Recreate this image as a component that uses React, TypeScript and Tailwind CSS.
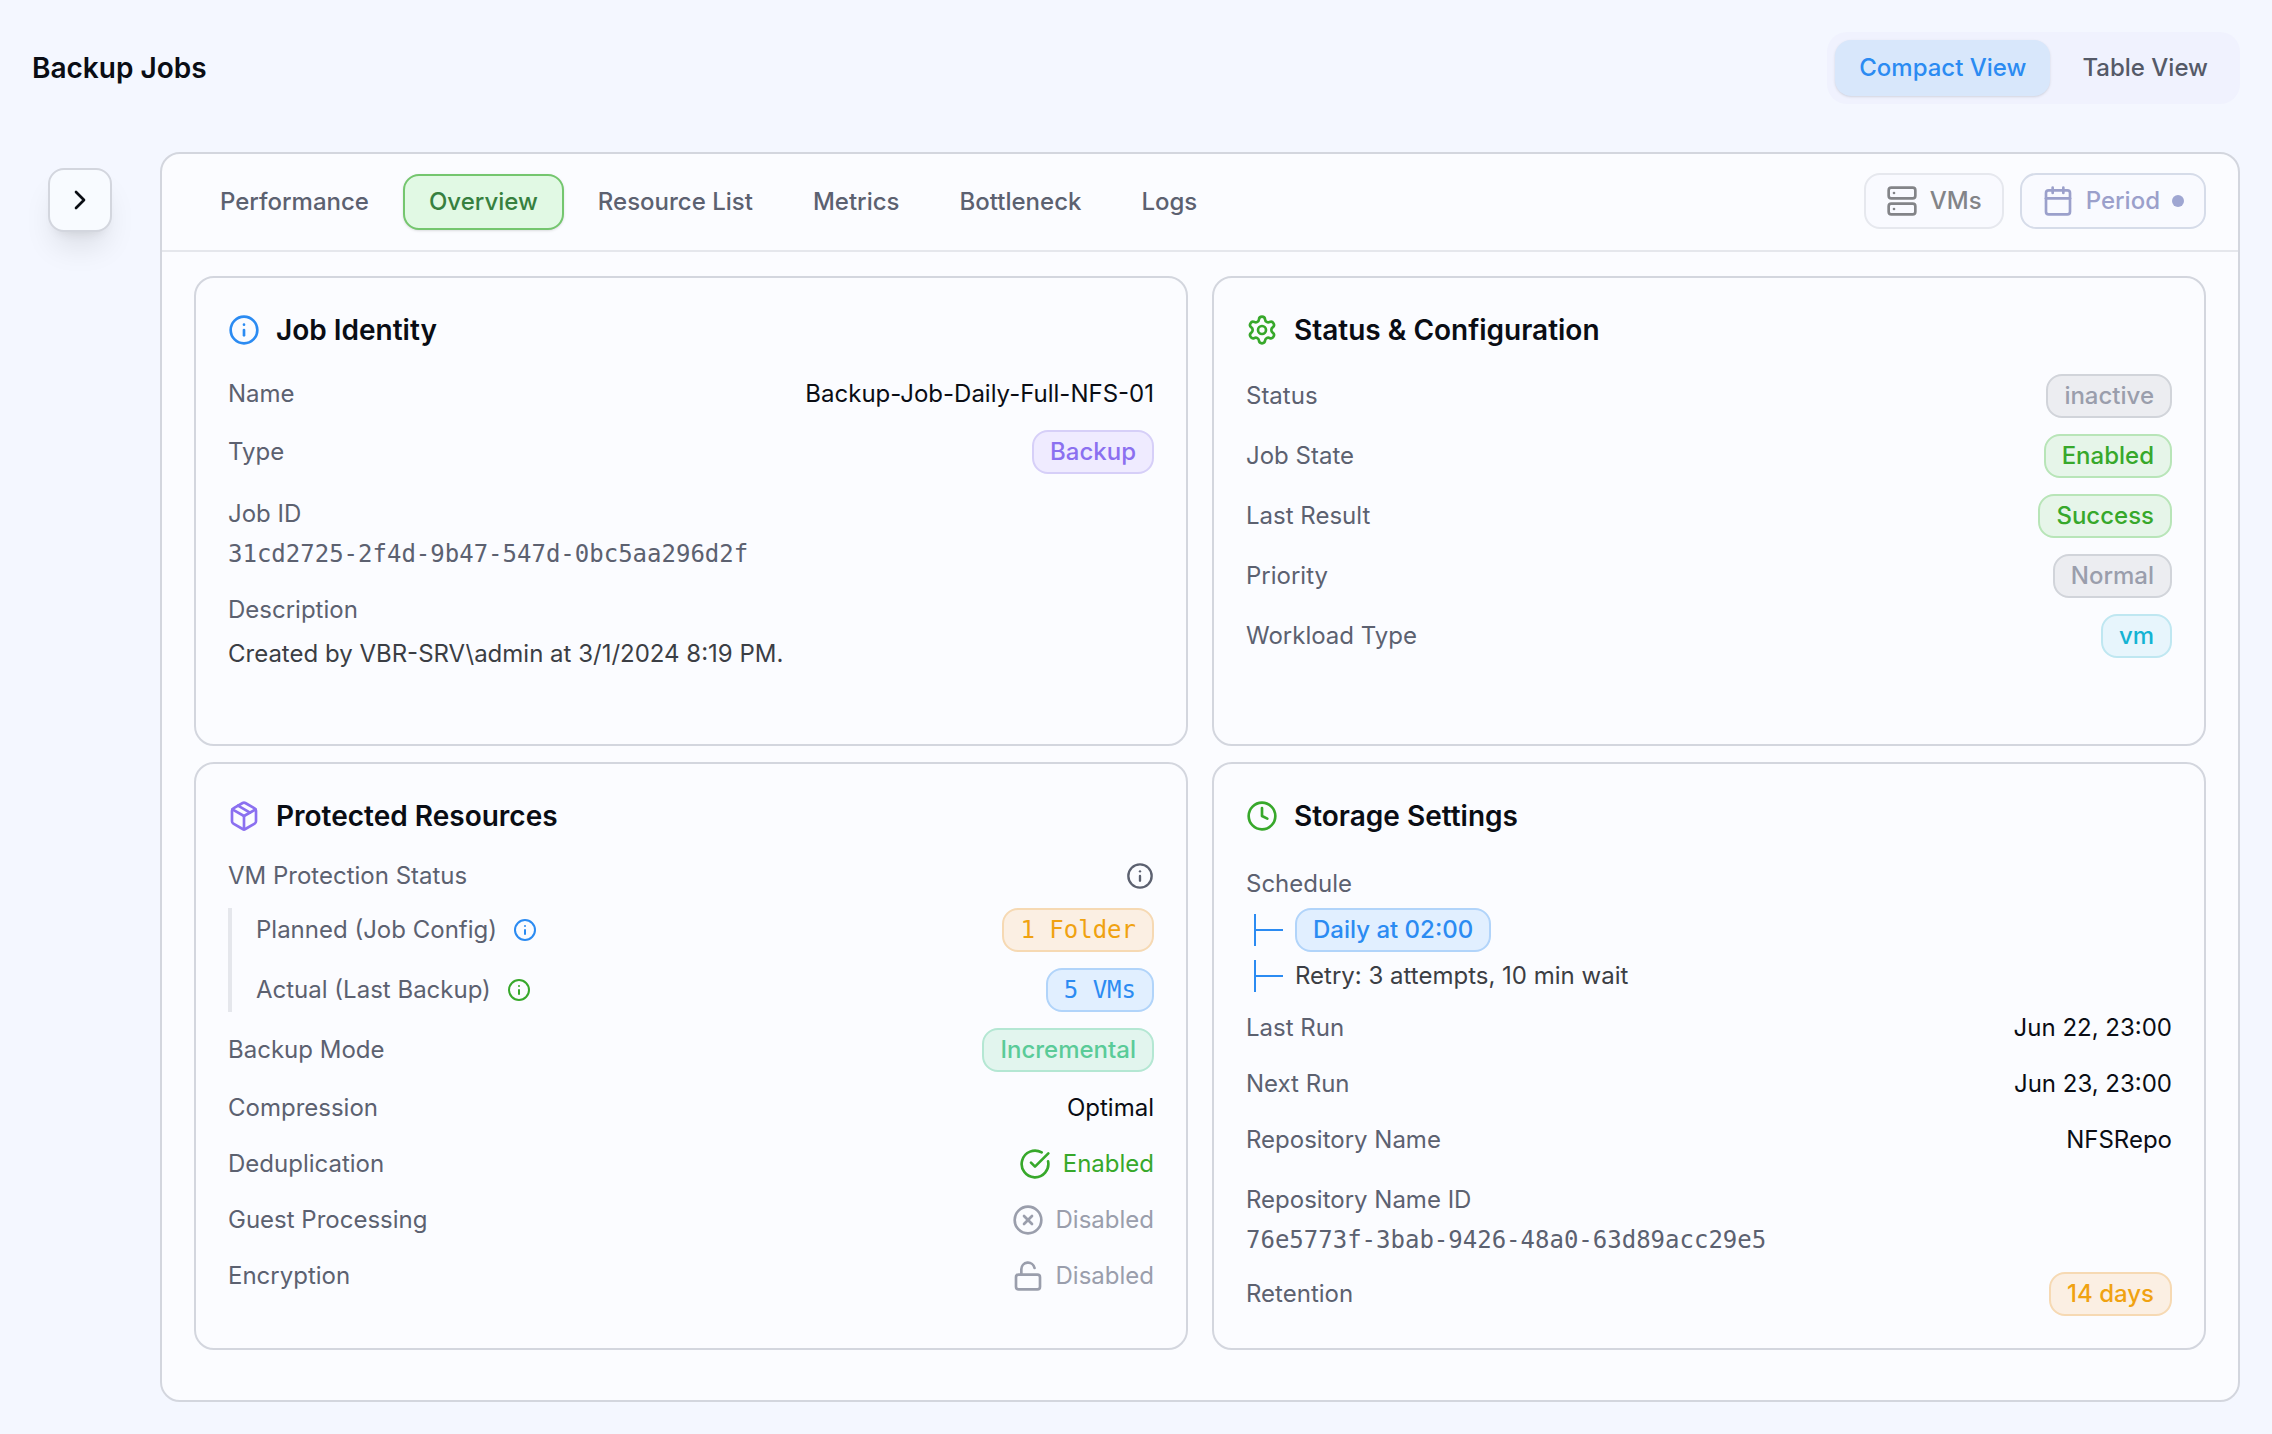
import { ReactNode, useState } from 'react'
import {
  Calendar,
  ChevronRight,
  CircleCheckBig,
  CircleX,
  Clock,
  Info,
  LockOpen,
  Package,
  Server,
  Settings
} from 'lucide-react'

const badgeTones = {
  gray: 'bg-[#ecedf1] border-[#d1d4da] text-[#9a9eac]',
  green: 'bg-[#e6f5e9] border-[#b8e5b8] text-[#37a82b]',
  cyan: 'bg-[#e7f5fc] border-[#bfe7f1] text-[#14b3d3]',
  purple: 'bg-[#efebff] border-[#d6cff8] text-[#8b70f0]',
  orange: 'bg-[#fbefe3] border-[#f6d9b3] text-[#f0a211]',
  blue: 'bg-[#e1efff] border-[#b1d4fa] text-[#2b8bf2]',
  teal: 'bg-[#e2f5ee] border-[#b4e7d3] text-[#5acb98]'
}

const tabs = ['Performance', 'Overview', 'Resource List', 'Metrics', 'Bottleneck', 'Logs']
const mono = "font-['DejaVu_Sans_Mono',monospace]"

function Badge({ tone, isMono, children }: { tone: keyof typeof badgeTones; isMono?: boolean; children: ReactNode }) {
  return (
    <span
      className={`inline-flex h-11 items-center rounded-2xl border-2 px-4 whitespace-pre ${badgeTones[tone]} ${
        isMono ? mono : 'font-medium'
      }`}
    >
      {children}
    </span>
  )
}

function Card({ icon, title, children }: { icon: ReactNode; title: string; children: ReactNode }) {
  return (
    <section className="rounded-[20px] border-2 border-[#d3d6de] bg-[#fbfcff] p-8">
      <div className="mb-6 flex h-10 items-center gap-4">
        {icon}
        <h3 className="text-[28px] font-semibold text-[#0a0d14]">{title}</h3>
      </div>
      <div className="flex flex-col gap-4">{children}</div>
    </section>
  )
}

function Row({ label, children }: { label: string; children: ReactNode }) {
  return (
    <div className="flex min-h-10 items-center justify-between">
      <span className="text-[#5c6170]">{label}</span>
      <span className="flex items-center text-[#0a0d14]">{children}</span>
    </div>
  )
}

function IdBlock({ label, value }: { label: string; value: string }) {
  return (
    <div className="h-20 pt-1">
      <div className="leading-[39px] text-[#5c6170]">{label}</div>
      <div className={`leading-[43px] text-[#5c6170] ${mono}`}>{value}</div>
    </div>
  )
}

function Branch() {
  return (
    <span className="flex h-8 w-[29px] items-center border-l-2 border-[#2b8bf2]">
      <span className="h-0.5 w-full bg-[#2b8bf2]" />
    </span>
  )
}

export default function App() {
  const [activeTab, setActiveTab] = useState('Overview')
  const [view, setView] = useState('Compact View')

  return (
    <div className="h-[1434px] w-[2272px] bg-[#f4f7ff] font-['Inter',sans-serif] text-[24px] leading-8">
      <header className="flex items-center justify-between pt-8 pr-8 pl-8">
        <h1 className="text-[28px] font-semibold text-[#0a0d14]">Backup Jobs</h1>
        <div className="flex gap-2 rounded-[20px] bg-[#f0f2fe] p-2">
          {['Compact View', 'Table View'].map((name) => (
            <button
              key={name}
              onClick={() => setView(name)}
              className={`h-14 rounded-2xl px-6 font-medium ${
                view === name ? 'bg-[#d8e7fb] text-[#2b8bf2] shadow-sm' : 'text-[#555a68]'
              }`}
            >
              {name}
            </button>
          ))}
        </div>
      </header>

      <div className="mt-12 flex gap-12 pr-8 pl-12">
        <button className="mt-4 flex size-16 shrink-0 items-center justify-center rounded-2xl border-2 border-[#d3d6de] bg-[#f8fbff] text-[#0a0d14] shadow-[0_20px_30px_-6px_rgba(0,0,0,0.1),0_8px_12px_-8px_rgba(0,0,0,0.1)]">
          <ChevronRight size={32} />
        </button>

        <main className="h-[1250px] flex-1 rounded-[20px] border-2 border-[#d3d6de] bg-[#fbfcff]">
          <div className="flex h-[98px] items-center justify-between border-b-2 border-[#e5e7ec] px-8">
            <nav className="flex gap-2">
              {tabs.map((tab) => (
                <button
                  key={tab}
                  onClick={() => setActiveTab(tab)}
                  className={`h-14 rounded-2xl border-2 px-6 font-medium ${
                    activeTab === tab
                      ? 'border-[#74c66e] bg-[#e1f9e4] text-[#37803f] shadow-sm'
                      : 'border-transparent text-[#5c6170]'
                  }`}
                >
                  {tab}
                </button>
              ))}
            </nav>
            <div className="mb-0.5 flex gap-4">
              <button className="flex h-14 items-center gap-3 rounded-2xl border-2 border-[#e6e8ee] bg-[#f9faff] px-5 font-medium text-[#838488]">
                <Server size={32} />
                VMs
              </button>
              <button className="flex h-14 items-center gap-3 rounded-2xl border-2 border-[#d6dce9] bg-[#f9faff] px-5 font-medium text-[#9ba0cb]">
                <Calendar size={32} />
                Period
                <span className="size-3 rounded-full bg-[#9fa6d2]" />
              </button>
            </div>
          </div>

          <div className="grid grid-cols-2 grid-rows-[470px_588px] gap-x-6 gap-y-4 px-8 pt-6">
            <Card icon={<Info size={32} className="text-[#2b8bf2]" />} title="Job Identity">
              <Row label="Name">Backup-Job-Daily-Full-NFS-01</Row>
              <Row label="Type">
                <Badge tone="purple">Backup</Badge>
              </Row>
              <IdBlock label="Job ID" value="31cd2725-2f4d-9b47-547d-0bc5aa296d2f" />
              <div className="pt-1">
                <div className="leading-[39px] text-[#5c6170]">Description</div>
                <div className="mt-[5px] leading-[39px] text-[#3b3e44]">Created by VBR-SRV\admin at 3/1/2024 8:19 PM.</div>
              </div>
            </Card>

            <Card icon={<Settings size={32} className="text-[#37a82b]" />} title="Status & Configuration">
              <Row label="Status">
                <Badge tone="gray">inactive</Badge>
              </Row>
              <Row label="Job State">
                <Badge tone="green">Enabled</Badge>
              </Row>
              <Row label="Last Result">
                <Badge tone="green">Success</Badge>
              </Row>
              <Row label="Priority">
                <Badge tone="gray">Normal</Badge>
              </Row>
              <Row label="Workload Type">
                <Badge tone="cyan">vm</Badge>
              </Row>
            </Card>

            <Card icon={<Package size={32} className="text-[#8b70f0]" />} title="Protected Resources">
              <div className="flex h-8 items-center justify-between text-[#5c6170]">
                <span>VM Protection Status</span>
                <Info size={28} />
              </div>
              <div className="flex flex-col gap-4 border-l-4 border-[#e5e7ec] pl-6 text-[#5c6170]">
                <div className="flex items-center">
                  Planned (Job Config)
                  <Info size={24} className="mr-auto ml-4 text-[#2b8bf2]" />
                  <Badge tone="orange" isMono>1 Folder</Badge>
                </div>
                <div className="flex items-center">
                  Actual (Last Backup)
                  <Info size={24} className="mr-auto ml-4 text-[#37a82b]" />
                  <Badge tone="blue" isMono>5 VMs</Badge>
                </div>
              </div>
              <Row label="Backup Mode">
                <Badge tone="teal">Incremental</Badge>
              </Row>
              <Row label="Compression">Optimal</Row>
              <Row label="Deduplication">
                <span className="flex items-center gap-3 text-[#37a82b]">
                  <CircleCheckBig size={32} />
                  Enabled
                </span>
              </Row>
              <Row label="Guest Processing">
                <span className="flex items-center gap-3 text-[#9a9eac]">
                  <CircleX size={32} />
                  Disabled
                </span>
              </Row>
              <Row label="Encryption">
                <span className="flex items-center gap-3 text-[#9a9eac]">
                  <LockOpen size={32} />
                  Disabled
                </span>
              </Row>
            </Card>

            <Card icon={<Clock size={32} className="text-[#37a82b]" />} title="Storage Settings">
              <div className="pt-1">
                <div className="leading-[39px] text-[#5c6170]">Schedule</div>
                <div className="mt-[5px] flex items-center gap-3 pl-2">
                  <Branch />
                  <Badge tone="blue">Daily at 02:00</Badge>
                </div>
                <div className="mt-1 -mb-1 flex h-10 items-center gap-3 pl-2 text-[#3b3e44]">
                  <Branch />
                  Retry: 3 attempts, 10 min wait
                </div>
              </div>
              <Row label="Last Run">Jun 22, 23:00</Row>
              <Row label="Next Run">Jun 23, 23:00</Row>
              <Row label="Repository Name">NFSRepo</Row>
              <IdBlock label="Repository Name ID" value="76e5773f-3bab-9426-48a0-63d89acc29e5" />
              <Row label="Retention">
                <Badge tone="orange">14 days</Badge>
              </Row>
            </Card>
          </div>
        </main>
      </div>
    </div>
  )
}
